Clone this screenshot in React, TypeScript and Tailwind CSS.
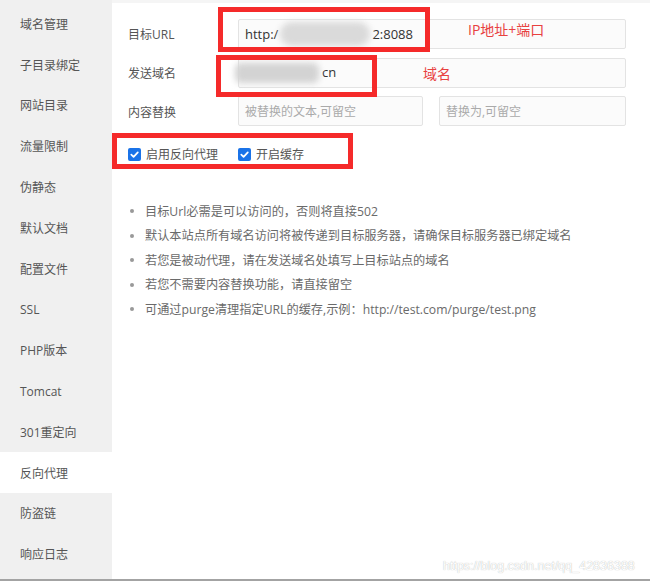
import React from "react";

const menu = [
  "域名管理",
  "子目录绑定",
  "网站目录",
  "流量限制",
  "伪静态",
  "默认文档",
  "配置文件",
  "SSL",
  "PHP版本",
  "Tomcat",
  "301重定向",
  "反向代理",
  "防盗链",
  "响应日志",
];

const tips = [
  "目标Url必需是可以访问的，否则将直接502",
  "默认本站点所有域名访问将被传递到目标服务器，请确保目标服务器已绑定域名",
  "若您是被动代理，请在发送域名处填写上目标站点的域名",
  "若您不需要内容替换功能，请直接留空",
  "可通过purge清理指定URL的缓存,示例：http://test.com/purge/test.png",
];

function Check() {
  return (
    <span className="w-[13px] h-[13px] rounded-[2px] bg-[#1a73e8] flex items-center justify-center shrink-0">
      <svg width="11" height="11" viewBox="0 0 12 12">
        <path d="M2.5 6.2 L5 8.6 L9.6 3.6" fill="none" stroke="#fff" strokeWidth="1.9" strokeLinecap="round" strokeLinejoin="round" />
      </svg>
    </span>
  );
}

export default function App() {
  return (
    <div
      className="relative w-[650px] h-[581px] bg-white overflow-hidden flex flex-col"
      style={{ fontFamily: '"Open Sans", "Noto Sans CJK SC", sans-serif' }}
    >
      <div className="flex flex-1 min-h-0">
        <div className="w-[112px] bg-[#f0f0f0] pt-[3px] shrink-0">
          {menu.map((m) => (
            <div
              key={m}
              className={
                "h-[40.8px] flex items-center px-[20px] pt-[3px] text-[12px] leading-none text-[#555] " +
                (m === "反向代理" ? "bg-white" : "")
              }
            >
              {m}
            </div>
          ))}
        </div>
        <div className="flex-1 border-t-[3px] border-[#f5f5f5] pl-[16px] pt-[16px]">
          <div className="flex flex-col gap-[8.5px]">
            <div className="flex items-center h-[30px]">
              <div className="w-[110px] pt-[2px] text-[12px] text-[#555] leading-none">目标URL</div>
              <div className="w-[388px] h-[30px] border border-[#e3e3e3] rounded-[2px] bg-[#fbfbfb] pl-[6px] flex items-center text-[13px] text-[#333] leading-none">
                <span>http:/</span>
                <span className="inline-block w-[90px] h-[24px] rounded-full bg-[#dadada] blur-[3px] mx-[2px]" />
                <span>2:8088</span>
              </div>
            </div>
            <div className="flex items-center h-[30px]">
              <div className="w-[110px] pt-[2px] text-[12px] text-[#555] leading-none">发送域名</div>
              <div className="w-[388px] h-[30px] border border-[#e3e3e3] rounded-[2px] bg-[#fbfbfb] pl-[6px] flex items-center text-[13px] text-[#333] leading-none">
                <span className="inline-block -ml-[10px] w-[84px] h-[20px] rounded-[6px] bg-[#d3d3d3] blur-[3px] mr-[3px]" />
                <span>cn</span>
              </div>
            </div>
            <div className="flex items-center h-[30px]">
              <div className="w-[110px] pt-[3px] text-[12px] text-[#555] leading-none">内容替换</div>
              <div className="w-[185px] h-[30px] border border-[#e3e3e3] rounded-[2px] bg-[#fbfbfb] pl-[6px] pt-[1px] flex items-center text-[12px] text-[#aaa] leading-none">
                被替换的文本,可留空
              </div>
              <div className="w-[187px] ml-[16px] h-[30px] border border-[#e3e3e3] rounded-[2px] bg-[#fbfbfb] pl-[6px] pt-[1px] flex items-center text-[12px] text-[#aaa] leading-none">
                替换为,可留空
              </div>
            </div>
          </div>

          <div className="mt-[18px] h-[20px] flex items-center text-[12px] text-[#555] leading-none">
            <Check />
            <span className="ml-[5px] w-[72px] pt-[1px]">启用反向代理</span>
            <span className="ml-[20px]">
              <Check />
            </span>
            <span className="ml-[5px] pt-[1px]">开启缓存</span>
          </div>

          <ul className="mt-[35px]">
            {tips.map((t) => (
              <li key={t} className="h-[24.5px] flex items-center text-[12.2px] text-[#6a6a6a] leading-none">
                <span className="ml-[2px] w-[4px] h-[4px] rounded-full bg-[#999] mr-[11px]" />
                <span className="pt-[1px]">{t}</span>
              </li>
            ))}
          </ul>
        </div>
      </div>
      <div className="h-[2px] bg-[#a3a3a3]" />

      {/* annotations */}
      <div className="absolute left-[218px] top-[7px] w-[212px] h-[45px] border-[5px] border-[#f52a2a]" />
      <div className="absolute left-[216px] top-[55px] w-[161px] h-[42px] border-[5px] border-[#f52a2a]" />
      <div className="absolute left-[112px] top-[133px] w-[241px] h-[36px] border-[5px] border-[#f52a2a]" />
      <div className="absolute left-[468px] top-[21px] text-[14px] leading-[18px] text-[#e8413f]">IP地址+端口</div>
      <div className="absolute left-[423px] top-[65px] text-[14px] leading-[18px] text-[#e8413f]">域名</div>

      <div
        className="absolute left-[443px] top-[558px] text-[12.5px] leading-[16px] text-white [text-shadow:0_0_1px_rgba(0,0,0,0.35)]"
        style={{ fontFamily: '"Liberation Sans", sans-serif' }}
      >
        https://blog.csdn.net/qq_42836388
      </div>
    </div>
  );
}
